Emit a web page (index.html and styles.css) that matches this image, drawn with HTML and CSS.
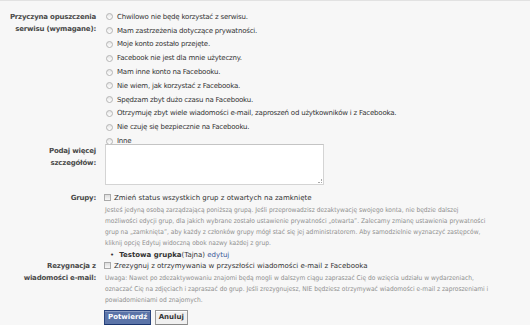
FILE: index.html
```html
<!DOCTYPE html>
<html lang="pl">
<head>
  <meta charset="UTF-8">
  <title>Dezaktywuj konto</title>
  <link rel="stylesheet" href="styles.css">
</head>
<body>
  <div class="form">
    <!-- Powód -->
    <div class="row reasons">
      <div class="label">Przyczyna opuszczenia<br>serwisu (wymagane):</div>
      <div class="field">
        <label class="opt"><span class="radio"></span>Chwilowo nie będę korzystać z serwisu.</label>
        <label class="opt"><span class="radio"></span>Mam zastrzeżenia dotyczące prywatności.</label>
        <label class="opt"><span class="radio"></span>Moje konto zostało przejęte.</label>
        <label class="opt"><span class="radio"></span>Facebook nie jest dla mnie użyteczny.</label>
        <label class="opt"><span class="radio"></span>Mam inne konto na Facebooku.</label>
        <label class="opt"><span class="radio"></span>Nie wiem, jak korzystać z Facebooka.</label>
        <label class="opt"><span class="radio"></span>Spędzam zbyt dużo czasu na Facebooku.</label>
        <label class="opt"><span class="radio"></span>Otrzymuję zbyt wiele wiadomości e-mail, zaproszeń od użytkowników i z Facebooka.</label>
        <label class="opt"><span class="radio"></span>Nie czuję się bezpiecznie na Facebooku.</label>
        <label class="opt"><span class="radio"></span>Inne</label>
      </div>
    </div>

    <!-- Szczegóły -->
    <div class="row details">
      <div class="label">Podaj więcej<br>szczegółów:</div>
      <div class="field"><div class="textarea"><span class="grip"></span></div></div>
    </div>

    <!-- Grupy -->
    <div class="row groups">
      <div class="label">Grupy:</div>
      <div class="field">
        <label class="check"><span class="box"></span>Zmień status wszystkich grup z otwartych na zamknięte</label>
        <p class="hint">Jesteś jedyną osobą zarządzającą poniższą grupą. Jeśli przeprowadzisz dezaktywację swojego konta, nie będzie dalszej<br>możliwości edycji grup, dla jakich wybrane zostało ustawienie prywatności „otwarta”. Zalecamy zmianę ustawienia prywatności<br>grup na „zamknięta”, aby każdy z członków grupy mógł stać się jej administratorem. Aby samodzielnie wyznaczyć zastępców,<br>kliknij opcję Edytuj widoczną obok nazwy każdej z grup.</p>
        <ul class="group-list">
          <li><b>Testowa grupka</b>(Tajna) <a href="#">edytuj</a></li>
        </ul>
      </div>
    </div>

    <!-- E-mail -->
    <div class="row email">
      <div class="label">Rezygnacja z<br>wiadomości e-mail:</div>
      <div class="field">
        <label class="check"><span class="box"></span>Zrezygnuj z otrzymywania w przyszłości wiadomości e-mail z Facebooka</label>
        <p class="hint">Uwaga: Nawet po zdezaktywowaniu znajomi będą mogli w dalszym ciągu zapraszać Cię do wzięcia udziału w wydarzeniach,<br>oznaczać Cię na zdjęciach i zapraszać do grup. Jeśli zrezygnujesz, NIE będziesz otrzymywać wiadomości e-mail z zaproszeniami i<br>powiadomieniami od znajomych.</p>
      </div>
    </div>

    <div class="row buttons">
      <div></div>
      <div class="field">
        <button class="btn btn-confirm">Potwierdź</button>
        <button class="btn btn-cancel">Anuluj</button>
      </div>
    </div>
  </div>
</body>
</html>
```

FILE: styles.css
```css
* { margin: 0; padding: 0; box-sizing: border-box; }
body { font-family: 'DejaVu Sans', sans-serif; font-size: 7px; background: #f7f7f7; color: #333; border-top: 1px solid #e2e2e2; height: 325px; overflow: hidden; }
.form { padding-top: 9px; }
.row { display: grid; grid-template-columns: 96px 420px; column-gap: 8px; }
.label { text-align: right; font-weight: bold; color: #4a4a4a; line-height: 12px; padding-top: 1px; letter-spacing: -0.2px; }
.opt { display: flex; align-items: center; height: 13.8px; color: #333; letter-spacing: -0.2px; }
.radio { width: 7px; height: 7px; border-radius: 50%; border: 1px solid #b5b5b5; background: linear-gradient(#e6e6e6, #fff); margin: 0 4px 0 2px; flex: none; }
.details { margin-top: -4px; }
.details .label { padding-top: 1px; }
.textarea { position: relative; width: 219px; height: 41px; margin-left: 1px; background: #fff; border: 1px solid #d4d4d4; border-top-color: #c4c4c4; }
.grip { position: absolute; right: 1px; bottom: 1px; width: 4px; height: 4px; border-right: 1px dotted #aaa; border-bottom: 1px dotted #aaa; }
.groups { margin-top: 7px; }
.groups .label, .email .label { padding-top: 0; }
.check { display: flex; align-items: center; height: 12px; color: #333; }
.box { width: 7px; height: 7px; border: 1px solid #a9a9a9; background: linear-gradient(#dcdcdc, #f8f8f8); margin-right: 3px; flex: none; }
.hint { color: #8f8f8f; font-family: 'DejaVu Sans Condensed', 'DejaVu Sans', sans-serif; font-stretch: condensed; font-size: 6.6px; line-height: 11px; margin-top: 1px; padding-left: 1px; white-space: nowrap; }
.group-list { list-style: none; padding-left: 6px; line-height: 12px; color: #333; }
.group-list li::before { content: "•"; color: #333; margin-right: 5px; }
.group-list b { color: #333; }
.group-list a { color: #3b5998; text-decoration: none; }
.email { margin-top: -1px; }
.buttons { margin-top: 4px; }
.btn { font-family: 'DejaVu Sans', sans-serif; font-size: 7px; font-weight: bold; height: 15px; padding: 0 3px; cursor: pointer; }
.btn-confirm { background: #5b74a8; color: #fff; border: 1px solid #29447e; border-bottom-color: #1a356e; box-shadow: inset 0 1px 0 #8a9cc2; }
.btn-cancel { background: #f0f0f0; color: #333; border: 1px solid #999; border-bottom-color: #888; margin-left: 1px; box-shadow: inset 0 1px 0 #fff; }
```
